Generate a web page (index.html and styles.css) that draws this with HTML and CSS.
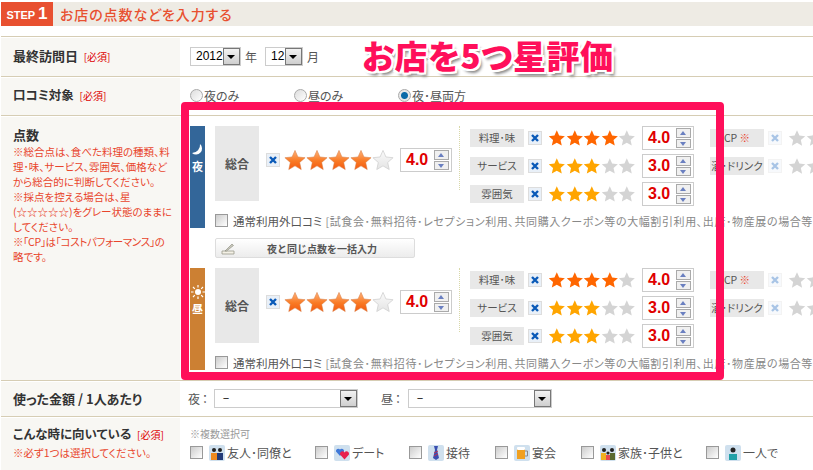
FILE: index.html
```html
<!DOCTYPE html>
<html lang="ja">

<head>
    <meta charset="UTF-8">
    <meta name="viewport" content="width=device-width, initial-scale=1.0">
    <title>お店の点数などを入力する</title>
    <link rel="stylesheet" href="styles.css">
</head>

<body>
    <svg class="defs" width="0" height="0">
        <defs>
            <linearGradient id="orangeGrad" x1="0" y1="0" x2="0" y2="1">
                <stop offset="0" stop-color="#ffb27a"/>
                <stop offset="0.55" stop-color="#f97a24"/>
                <stop offset="1" stop-color="#f4590f"/>
            </linearGradient>
            <linearGradient id="grayGrad" x1="0" y1="0" x2="0" y2="1">
                <stop offset="0" stop-color="#fafafa"/>
                <stop offset="1" stop-color="#e4e4e4"/>
            </linearGradient>
            <symbol id="star" viewBox="0 0 24 24">
                <path d="M12 1.500l3.200 7.200 7.800.8-5.900 5.200 1.700 7.700L12 18.400l-6.800 4 1.700-7.700L1 9.500l7.800-.8z"/>
            </symbol>
            <symbol id="cross" viewBox="0 0 12 12">
                <path d="M3 3l6 6M9 3l-6 6" fill="none" stroke="currentColor" stroke-width="2.400"/>
            </symbol>
        </defs>
    </svg>

    <div class="page">
        <div class="step-bar">
            <div class="step-badge">STEP <b>1</b></div>
            <h2>お店の点数などを入力する</h2>
        </div>

        <div class="form-table">
            <div class="row row-date">
                <div class="row-head"><strong>最終訪問日</strong> <span class="must">[必須]</span></div>
                <div class="row-body date-fields">
                    <div class="select select-year"><span>2012</span><i class="arrow"></i></div>
                    <span class="unit">年</span>
                    <div class="select select-month"><span>12</span><i class="arrow"></i></div>
                    <span class="unit">月</span>
                </div>
            </div>

            <div class="row row-target">
                <div class="row-head"><strong class="narrow">口コミ対象</strong> <span class="must">[必須]</span></div>
                <div class="row-body radios">
                    <label class="radio-item"><i class="radio"></i>夜のみ</label>
                    <label class="radio-item"><i class="radio"></i>昼のみ</label>
                    <label class="radio-item"><i class="radio on"></i>夜･昼両方</label>
                </div>
            </div>

            <div class="row row-score">
                <div class="row-head">
                    <strong>点数</strong>
                    <p class="note">※総合点は、食べた料理の種類、料<br>理･味、サービス、雰囲気、価格など<br>から総合的に判断してください。<br>※採点を控える場合は、星<br>(☆☆☆☆☆)をグレー状態のままに<br>してください。<br><span class="tight">※｢CP｣は｢コストパフォーマンス｣の</span><br>略です。</p>
                </div>
                <div class="row-body score-body">

                    <section class="panel">
                        <div class="panel-tab tab-night">
                            <svg width="14" height="14" viewBox="0 0 14 14"><path d="M9 1A6 6 0 0 1 1 10 8 8 0 0 0 9 1z" fill="#fff"/></svg>
                            <span>夜</span>
                        </div>
                        <div class="panel-main">
                            <div class="scores">
                                <div class="total-label">総合</div>
                                <div class="total-score">
                                    <span class="x-box"><svg width="12" height="12"><use href="#cross"/></svg></span>
                                    <span class="stars big">
                                        <svg class="s-on"><use href="#star"/></svg><svg class="s-on"><use href="#star"/></svg><svg class="s-on"><use href="#star"/></svg><svg class="s-on"><use href="#star"/></svg><svg class="s-off"><use href="#star"/></svg>
                                    </span>
                                    <span class="score-box"><em>4.0</em><span class="spin"><i class="up"></i><i class="down"></i></span></span>
                                </div>
                                <div class="sub-scores">
                                    <div class="sub-label">料理･味</div>
                                    <span class="x-box"><svg width="12" height="12"><use href="#cross"/></svg></span>
                                    <span class="stars small four">
                                        <svg class="s-on"><use href="#star"/></svg><svg class="s-on"><use href="#star"/></svg><svg class="s-on"><use href="#star"/></svg><svg class="s-on"><use href="#star"/></svg><svg class="s-off"><use href="#star"/></svg>
                                    </span>
                                    <span class="score-box"><em>4.0</em><span class="spin"><i class="up"></i><i class="down"></i></span></span>
                                    <div class="sub-label extra">CP <span class="kome">※</span></div>
                                    <span class="x-box faded"><svg width="12" height="12"><use href="#cross"/></svg></span>
                                    <span class="stars small"><svg class="s-off"><use href="#star"/></svg><svg class="s-off"><use href="#star"/></svg></span>

                                    <div class="sub-label">サービス</div>
                                    <span class="x-box"><svg width="12" height="12"><use href="#cross"/></svg></span>
                                    <span class="stars small">
                                        <svg class="s-on"><use href="#star"/></svg><svg class="s-on"><use href="#star"/></svg><svg class="s-on"><use href="#star"/></svg><svg class="s-off"><use href="#star"/></svg><svg class="s-off"><use href="#star"/></svg>
                                    </span>
                                    <span class="score-box"><em>3.0</em><span class="spin"><i class="up"></i><i class="down"></i></span></span>
                                    <div class="sub-label extra">酒･ドリンク</div>
                                    <span class="x-box faded"><svg width="12" height="12"><use href="#cross"/></svg></span>
                                    <span class="stars small"><svg class="s-off"><use href="#star"/></svg><svg class="s-off"><use href="#star"/></svg></span>

                                    <div class="sub-label">雰囲気</div>
                                    <span class="x-box"><svg width="12" height="12"><use href="#cross"/></svg></span>
                                    <span class="stars small">
                                        <svg class="s-on"><use href="#star"/></svg><svg class="s-on"><use href="#star"/></svg><svg class="s-on"><use href="#star"/></svg><svg class="s-off"><use href="#star"/></svg><svg class="s-off"><use href="#star"/></svg>
                                    </span>
                                    <span class="score-box"><em>3.0</em><span class="spin"><i class="up"></i><i class="down"></i></span></span>
                                </div>
                            </div>
                            <div class="exclude">
                                <i class="check"></i>
                                <span class="exclude-title">通常利用外口コミ</span>
                                <span class="exclude-note">[試食会･無料招待･レセプション利用､共同購入クーポン等の大幅割引利用､出店･物産展の場合等､通常とは異なるサービス]</span>
                            </div>
                        </div>
                    </section>

                    <button class="copy-btn" type="button">
                        <svg width="14" height="14" viewBox="0 0 14 14"><path d="M1 10h12v3H1z" fill="#f4f1e6" stroke="#9a9a8a" stroke-width=".8"/><path d="M4 10l7-7 1.500 1.500-7 5.500z" fill="#c8c8bc" stroke="#88887a" stroke-width=".6"/></svg>
                        <span>夜と同じ点数を一括入力</span>
                    </button>

                    <section class="panel">
                        <div class="panel-tab tab-day">
                            <svg width="14" height="14" viewBox="0 0 14 14"><circle cx="7" cy="7" r="3" fill="#fff"/><path d="M7 0v2.500M7 11.500V14M0 7h2.500M11.500 7H14M2 2l1.800 1.800M10.200 10.200L12 12M12 2l-1.800 1.800M3.800 10.200L2 12" stroke="#fff" stroke-width="1.200"/></svg>
                            <span>昼</span>
                        </div>
                        <div class="panel-main">
                            <div class="scores">
                                <div class="total-label">総合</div>
                                <div class="total-score">
                                    <span class="x-box"><svg width="12" height="12"><use href="#cross"/></svg></span>
                                    <span class="stars big">
                                        <svg class="s-on"><use href="#star"/></svg><svg class="s-on"><use href="#star"/></svg><svg class="s-on"><use href="#star"/></svg><svg class="s-on"><use href="#star"/></svg><svg class="s-off"><use href="#star"/></svg>
                                    </span>
                                    <span class="score-box"><em>4.0</em><span class="spin"><i class="up"></i><i class="down"></i></span></span>
                                </div>
                                <div class="sub-scores">
                                    <div class="sub-label">料理･味</div>
                                    <span class="x-box"><svg width="12" height="12"><use href="#cross"/></svg></span>
                                    <span class="stars small four">
                                        <svg class="s-on"><use href="#star"/></svg><svg class="s-on"><use href="#star"/></svg><svg class="s-on"><use href="#star"/></svg><svg class="s-on"><use href="#star"/></svg><svg class="s-off"><use href="#star"/></svg>
                                    </span>
                                    <span class="score-box"><em>4.0</em><span class="spin"><i class="up"></i><i class="down"></i></span></span>
                                    <div class="sub-label extra">CP <span class="kome">※</span></div>
                                    <span class="x-box faded"><svg width="12" height="12"><use href="#cross"/></svg></span>
                                    <span class="stars small"><svg class="s-off"><use href="#star"/></svg><svg class="s-off"><use href="#star"/></svg></span>

                                    <div class="sub-label">サービス</div>
                                    <span class="x-box"><svg width="12" height="12"><use href="#cross"/></svg></span>
                                    <span class="stars small">
                                        <svg class="s-on"><use href="#star"/></svg><svg class="s-on"><use href="#star"/></svg><svg class="s-on"><use href="#star"/></svg><svg class="s-off"><use href="#star"/></svg><svg class="s-off"><use href="#star"/></svg>
                                    </span>
                                    <span class="score-box"><em>3.0</em><span class="spin"><i class="up"></i><i class="down"></i></span></span>
                                    <div class="sub-label extra">酒･ドリンク</div>
                                    <span class="x-box faded"><svg width="12" height="12"><use href="#cross"/></svg></span>
                                    <span class="stars small"><svg class="s-off"><use href="#star"/></svg><svg class="s-off"><use href="#star"/></svg></span>

                                    <div class="sub-label">雰囲気</div>
                                    <span class="x-box"><svg width="12" height="12"><use href="#cross"/></svg></span>
                                    <span class="stars small">
                                        <svg class="s-on"><use href="#star"/></svg><svg class="s-on"><use href="#star"/></svg><svg class="s-on"><use href="#star"/></svg><svg class="s-off"><use href="#star"/></svg><svg class="s-off"><use href="#star"/></svg>
                                    </span>
                                    <span class="score-box"><em>3.0</em><span class="spin"><i class="up"></i><i class="down"></i></span></span>
                                </div>
                            </div>
                            <div class="exclude">
                                <i class="check"></i>
                                <span class="exclude-title">通常利用外口コミ</span>
                                <span class="exclude-note">[試食会･無料招待･レセプション利用､共同購入クーポン等の大幅割引利用､出店･物産展の場合等､通常とは異なるサービス]</span>
                            </div>
                        </div>
                    </section>
                </div>
            </div>

            <div class="row row-price">
                <div class="row-head"><strong>使った金額 / 1人あたり</strong></div>
                <div class="row-body price-fields">
                    <span class="price-label">夜：</span>
                    <div class="select select-price"><span>－</span><i class="arrow"></i></div>
                    <span class="price-label second">昼：</span>
                    <div class="select select-price"><span>－</span><i class="arrow"></i></div>
                </div>
            </div>

            <div class="row row-scene">
                <div class="row-head">
                    <strong class="narrow">こんな時に向いている</strong> <span class="must">[必須]</span>
                    <p class="note">※必ず1つは選択してください。</p>
                </div>
                <div class="row-body scene-body">
                    <p class="scene-hint">※複数選択可</p>
                    <div class="scene-list">
                        <label class="scene w1"><i class="check"></i>
                            <svg class="pic" viewBox="0 0 16 16"><rect width="16" height="16" rx="2" fill="#cfe0ee"/><circle cx="5" cy="5" r="2" fill="#222"/><circle cx="11" cy="5" r="2" fill="#222"/><path d="M2 15V8h6v7z" fill="#ee8a20"/><path d="M8 15V8h6v7z" fill="#223a78"/></svg>友人･同僚と</label>
                        <label class="scene w2"><i class="check"></i>
                            <svg class="pic" viewBox="0 0 16 16"><rect width="16" height="16" rx="2" fill="#cfe0ee"/><path d="M6 11L2 6.500a2.300 2.300 0 0 1 4-2 2.300 2.300 0 0 1 4 2z" fill="#3f78d8"/><path d="M10.500 14.500L6 9.500a2.500 2.500 0 0 1 4.500-2 2.500 2.500 0 0 1 4.500 2z" fill="#e8204e"/></svg>デート</label>
                        <label class="scene w3"><i class="check"></i>
                            <svg class="pic" viewBox="0 0 16 16"><rect width="16" height="16" rx="2" fill="#cfe0ee"/><path d="M6 1h4L9 5l2 8-3 2-3-2 2-8z" fill="#3a4fb0"/><path d="M6 8l4-2M6 11l4-2" stroke="#c03050"/></svg>接待</label>
                        <label class="scene w3"><i class="check"></i>
                            <svg class="pic" viewBox="0 0 16 16"><rect width="16" height="16" rx="2" fill="#cfe0ee"/><rect x="3" y="4" width="8" height="10" fill="#f0a020"/><rect x="3" y="2" width="8" height="3" rx="1" fill="#fff"/><path d="M11 6h2.500v5H11" fill="none" stroke="#888"/></svg>宴会</label>
                        <label class="scene w4"><i class="check"></i>
                            <svg class="pic" viewBox="0 0 16 16"><rect width="16" height="16" rx="2" fill="#cfe0ee"/><circle cx="4" cy="5" r="2" fill="#222"/><circle cx="12" cy="5" r="2" fill="#222"/><circle cx="8" cy="8" r="1.600" fill="#222"/><path d="M1 15V8h5v7z" fill="#f0b020"/><path d="M10 15V8h5v7z" fill="#5a6a30"/><path d="M6 15v-5h4v5z" fill="#e84850"/></svg>家族･子供と</label>
                        <label class="scene"><i class="check"></i>
                            <svg class="pic" viewBox="0 0 16 16"><rect width="16" height="16" rx="2" fill="#cfe0ee"/><circle cx="8" cy="5" r="2.500" fill="#222"/><path d="M4 15V9h8v6z" fill="#20a0a8"/></svg>一人で</label>
                    </div>
                </div>
            </div>
        </div>

        <!-- 赤枠と見出しは画面の上に重ねる -->
        <div class="highlight"></div>
        <div class="headline">お店を5つ星評価</div>
    </div>
</body>

</html>
```

FILE: styles.css
```css
html, body {
    margin: 0;
    padding: 0;
    height: 470px;
    overflow: hidden;
    background-color: #fff;
}

body {
    font-family: "Noto Sans CJK JP", "Liberation Sans", sans-serif;
    font-size: 12px;
    color: #555;
    font-feature-settings: "palt";
}

.defs {
    position: absolute;
}

.page {
    position: relative;
    width: 812px;
    margin-left: 1px;
    padding-top: 2px;
}

/* step bar */
.step-bar {
    display: flex;
    align-items: center;
    height: 24px;
    background-color: #eeebe4;
}

.step-badge {
    width: 52px;
    height: 24px;
    line-height: 24px;
    text-align: center;
    background-color: #e85030;
    color: #fff;
    font-family: "Liberation Sans", sans-serif;
    font-size: 11px;
    font-weight: bold;
}

.step-badge b {
    font-size: 17px;
}

.step-bar h2 {
    margin: 0 0 0 7px;
    font-size: 14px;
    font-weight: 500;
    color: #e85030;
    letter-spacing: 0.9px;
}

/* rows */
.form-table {
    margin-top: 10px;
    border-top: 1px solid #d6cdb4;
}

.row {
    display: flex;
    border-bottom: 1px solid #d6cdb4;
}

.row-head {
    width: 167px;
    flex-shrink: 0;
    padding: 0 0 0 12px;
    margin-top: 1px;
    background-color: #f8f7f3;
}

.row-head strong {
    font-size: 13px;
    font-weight: 700;
    color: #333;
}

.row-head strong.narrow {
    font-size: 12.500px;
}

.must {
    margin-left: 3px;
    font-size: 10px;
    color: #d00;
}

.row-body {
    flex: 1;
    min-width: 0;
    overflow: hidden;
    padding-left: 10px;
}

.note {
    margin: 0;
    font-size: 10.500px;
    line-height: 15px;
    color: #e8452c;
    white-space: nowrap;
}

.tight {
    letter-spacing: -0.35px;
}

.row-date {
    height: 39px;
}

.row-date .row-head {
    line-height: 36px;
}

.row-target {
    height: 38px;
}

.row-target .row-head {
    line-height: 34px;
    padding-left: 12px;
}

.row-score {
    height: 264px;
}

.row-score .row-head {
    padding-top: 8px;
}

.row-price {
    height: 35px;
}

.row-price .row-head {
    line-height: 33px;
}

.row-scene {
    height: 53px;
    border-bottom: none;
}

.row-scene .row-head {
    line-height: 20px;
    padding-top: 6px;
}

/* selects */
.select {
    display: flex;
    align-items: center;
    justify-content: space-between;
    box-sizing: border-box;
    height: 19px;
    border: 1px solid #ccc;
    background-color: #fff;
    color: #000;
    font-family: "Liberation Sans", sans-serif;
    font-size: 12px;
    padding-left: 5px;
}

.arrow {
    position: relative;
    display: block;
    box-sizing: border-box;
    width: 17px;
    height: 17px;
    border: 1px solid #777;
    background: linear-gradient(#f2f2f2, #cfcfcf);
}

.arrow::after {
    content: "";
    position: absolute;
    left: 3px;
    top: 6px;
    border-style: solid;
    border-width: 4px 4px 0;
    border-color: #000 transparent transparent;
}

.date-fields {
    display: flex;
    align-items: center;
    height: 38px;
}

.select-year {
    width: 51px;
}

.select-month {
    width: 38px;
    margin-left: 8px;
}

.unit {
    margin-left: 4px;
    font-size: 12px;
}

/* radios */
.radios {
    display: flex;
    align-items: flex-start;
    padding-top: 11px;
}

.radio-item {
    display: flex;
    align-items: center;
    width: 104px;
    height: 14px;
    font-size: 12px;
    white-space: nowrap;
}

.radio {
    box-sizing: border-box;
    width: 13px;
    height: 13px;
    margin-right: 1px;
    border: 1px solid #aaa;
    border-radius: 50%;
    background: linear-gradient(135deg, #ddd, #fff);
}

.radio.on {
    background: radial-gradient(circle, #0a6aa8 0, #0a6aa8 3px, #e8e8e8 4px);
}

/* score panels */
.score-body {
    padding-top: 10px;
}

.panel {
    display: flex;
    height: 102px;
}

.panel-tab {
    display: flex;
    flex-direction: column;
    align-items: center;
    justify-content: center;
    gap: 1px;
    box-sizing: border-box;
    width: 15px;
    flex-shrink: 0;
    margin-right: 10px;
    padding-bottom: 38px;
    color: #fff;
    font-size: 11px;
    font-weight: 700;
}

.tab-night {
    background-color: #336699;
}

.tab-day {
    background-color: #cc8033;
}

.panel-main {
    flex: 1;
    min-width: 0;
}

.scores {
    display: flex;
    height: 84px;
}

.total-label {
    display: flex;
    align-items: center;
    justify-content: center;
    width: 44px;
    height: 75px;
    flex-shrink: 0;
    background-color: #e8e8e8;
    font-weight: 700;
    font-size: 12px;
    color: #555;
}

.total-score {
    display: flex;
    align-items: flex-start;
    width: 201px;
    flex-shrink: 0;
    padding-top: 22px;
    padding-left: 8px;
    box-sizing: border-box;
    border-right: 1px dotted #d8d8a8;
    height: 64px;
}

.x-box {
    display: inline-flex;
    box-sizing: border-box;
    width: 12px;
    height: 12px;
    flex-shrink: 0;
    background-color: #e9f0f8;
    color: #0a5ab8;
    outline: 1px solid #ddd;
    outline-offset: 0;
}

.total-score .x-box {
    margin-top: 6px;
    margin-right: 5px;
}

.x-box.faded {
    opacity: 0.35;
}

.stars {
    display: inline-flex;
    flex-shrink: 0;
}

.stars svg {
    display: block;
}

.stars.big svg {
    width: 22px;
    height: 22px;
}

.stars.big .s-on {
    fill: url(#orangeGrad);
    stroke: #d87a40;
    stroke-width: 0.6;
}

.stars.big .s-off {
    fill: url(#grayGrad);
    stroke: #ccc;
    stroke-width: 0.8;
}

.stars.big {
    margin-top: 1px;
    margin-right: 6px;
}

.stars.small svg {
    width: 18px;
    height: 18px;
}

.stars.small .s-on {
    fill: #ffa500;
}

.stars.small.four .s-on {
    fill: #ff6600;
}

.stars.small .s-off {
    fill: #d4d4d4;
}

.score-box {
    display: flex;
    align-items: center;
    justify-content: space-between;
    box-sizing: border-box;
    width: 52px;
    height: 24px;
    flex-shrink: 0;
    padding: 0 2px 0 5px;
    border: 1px solid #ccc;
    background-color: #fff;
}

.score-box em {
    font-family: "Liberation Sans", sans-serif;
    font-size: 16px;
    font-style: normal;
    font-weight: 700;
    color: #e00000;
}

.spin {
    display: flex;
    flex-direction: column;
    gap: 1px;
}

.spin i {
    position: relative;
    display: block;
    box-sizing: border-box;
    width: 15px;
    height: 9.500px;
    border: 1px solid #aaa;
    background-color: #f0f0f0;
}

.spin i::after {
    content: "";
    position: absolute;
    left: 3px;
    top: 2px;
    border-style: solid;
    border-color: transparent;
}

.spin .up::after {
    border-width: 0 3.500px 4px;
    border-bottom-color: #6a7fc0;
}

.spin .down::after {
    border-width: 4px 3.500px 0;
    border-top-color: #6a7fc0;
}

.sub-scores {
    display: grid;
    grid-template-columns: 54px 17px 95px 58px 70px 17px 40px;
    grid-auto-rows: 24px;
    row-gap: 4px;
    align-items: center;
    margin-left: 10px;
}

.sub-label {
    height: 18px;
    line-height: 18px;
    text-align: center;
    background-color: #e8e8e8;
    font-size: 10.500px;
    white-space: nowrap;
    overflow: hidden;
}

.sub-scores .x-box {
    margin-left: 5px;
}

.sub-scores .stars {
    margin-left: 7px;
    width: 88px;
}

.sub-scores .score-box {
    margin-left: 6px;
}

.sub-label.extra {
    margin-left: 16px;
    width: 54px;
}

.kome {
    color: #e8452c;
}

.exclude {
    display: flex;
    align-items: center;
    height: 15px;
    margin-top: 3px;
    white-space: nowrap;
}

.check {
    display: block;
    box-sizing: border-box;
    width: 13px;
    height: 13px;
    flex-shrink: 0;
    border: 1px solid #999;
    background: linear-gradient(135deg, #ccc, #fff);
}

.exclude-title {
    margin-left: 5px;
    font-size: 11.500px;
}

.exclude-note {
    margin-left: 3px;
    font-size: 11px;
    letter-spacing: 0.6px;
    color: #888;
}

.copy-btn {
    display: flex;
    align-items: center;
    box-sizing: border-box;
    width: 200px;
    height: 20px;
    margin: 10px 0 10px 25px;
    padding: 0 0 0 5px;
    border: 1px solid #ddd;
    border-radius: 2px;
    background: linear-gradient(#fff, #ececec);
    font-family: inherit;
    font-size: 10px;
    font-weight: 700;
    color: #555;
}

.copy-btn span {
    margin-left: 32px;
}

/* price */
.price-fields {
    display: flex;
    align-items: center;
    height: 35px;
    padding-left: 8px;
}

.price-label {
    width: 26px;
    font-size: 12px;
    letter-spacing: 2px;
}

.price-label.second {
    width: 27px;
    margin-left: 23px;
}

.select-price {
    width: 144px;
}

/* scene */
.scene-hint {
    margin: 0;
    padding-top: 10px;
    line-height: 14px;
    font-size: 10px;
    color: #999;
}

.scene-list {
    display: flex;
    align-items: center;
    margin-top: 3px;
    white-space: nowrap;
}

.scene {
    display: flex;
    align-items: center;
    font-size: 12px;
}

.scene .pic {
    width: 16px;
    height: 16px;
    margin: 0 2px 0 6px;
}

.w1 {
    width: 125px;
}

.w2 {
    width: 94px;
}

.w3 {
    width: 86px;
}

.w4 {
    width: 125px;
}

/* overlay */
.highlight {
    position: absolute;
    left: 180px;
    top: 102px;
    box-sizing: border-box;
    width: 543px;
    height: 278px;
    border: 8px solid #ff0f5a;
    border-radius: 4px;
}

.headline {
    position: absolute;
    left: 361px;
    top: 34px;
    font-size: 33px;
    line-height: 42px;
    font-weight: 900;
    letter-spacing: 0.6px;
    color: #ff0f5a;
    white-space: nowrap;
    text-shadow: 2px 0 0 #fff, -2px 0 0 #fff, 0 2px 0 #fff, 0 -2px 0 #fff, 2px 2px 0 #fff, -2px 2px 0 #fff, 2px -2px 0 #fff, -2px -2px 0 #fff, 3px 4px 3px #888;
}
```
